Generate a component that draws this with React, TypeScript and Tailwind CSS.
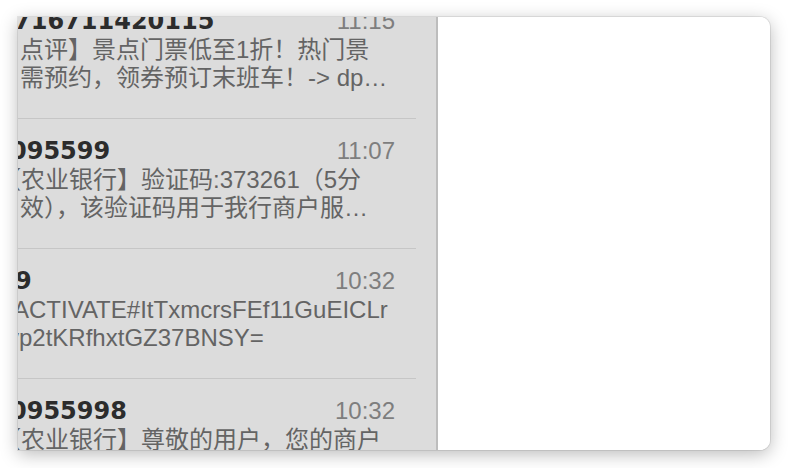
import React from "react";

type Line = { text: string; ml: string };
type Msg = { title: string; titleMl: string; time: string; lines: Line[] };

const msgs: Msg[] = [
  {
    title: "716711420115",
    titleMl: "-ml-[4px]",
    time: "11:15",
    lines: [
      { text: "点评】景点门票低至1折！热门景", ml: "ml-[2px]" },
      { text: "需预约，领券预订末班车！-> dp…", ml: "ml-[2px]" },
    ],
  },
  {
    title: "095599",
    titleMl: "-ml-[8px]",
    time: "11:07",
    lines: [
      { text: "【农业银行】验证码:373261（5分", ml: "-ml-[21px]" },
      { text: "效），该验证码用于我行商户服…", ml: "ml-[2px]" },
    ],
  },
  {
    title: "9",
    titleMl: "-ml-[3px]",
    time: "10:32",
    lines: [
      { text: "ACTIVATE#ItTxmcrsFEf11GuEICLr", ml: "-ml-[5px]" },
      { text: "yp2tKRfhxtGZ37BNSY=", ml: "-ml-[11px]" },
    ],
  },
  {
    title: "0955998",
    titleMl: "-ml-[8px]",
    time: "10:32",
    lines: [{ text: "【农业银行】尊敬的用户，您的商户", ml: "-ml-[21px]" }],
  },
];

export default function App() {
  return (
    <div className="w-[788px] h-[468px] bg-white overflow-hidden pt-[17px] pl-[18px]">
      <div className="flex w-[752px] h-[433px] rounded-r-[10px] bg-white shadow-[0_4px_18px_rgba(0,0,0,0.28),0_0_0_1px_rgba(0,0,0,0.08)] overflow-hidden">
        <div className="w-[420px] h-full bg-[#dcdcdc] overflow-hidden border-r-2 border-[#bdbdbd] shrink-0">
          <div className="-mt-[28px] flex flex-col">
            {msgs.map((m, i) => (
              <div
                key={i}
                className="h-[130px] mr-[20px] border-b border-[#c6c6c6] pt-[17px] overflow-hidden"
                style={{ fontFamily: '"Liberation Sans", "Noto Sans CJK SC", sans-serif' }}
              >
                <div className="flex items-center justify-between h-[30px] pr-[21px]">
                  <span
                    className={`${m.titleMl} text-[24px] leading-[30px] font-bold text-[#2c2c2c] whitespace-nowrap`}
                    style={{ fontFamily: '"DejaVu Sans", sans-serif' }}
                  >
                    {m.title}
                  </span>
                  <span className="text-[24px] leading-[30px] text-[#7e7e7e]">{m.time}</span>
                </div>
                {m.lines.map((l, j) => (
                  <div
                    key={j}
                    className={`${l.ml} text-[24px] leading-[28px] text-[#646464] whitespace-nowrap`}
                  >
                    {l.text}
                  </div>
                ))}
              </div>
            ))}
          </div>
        </div>
        <div className="flex-1 bg-white" />
      </div>
    </div>
  );
}
